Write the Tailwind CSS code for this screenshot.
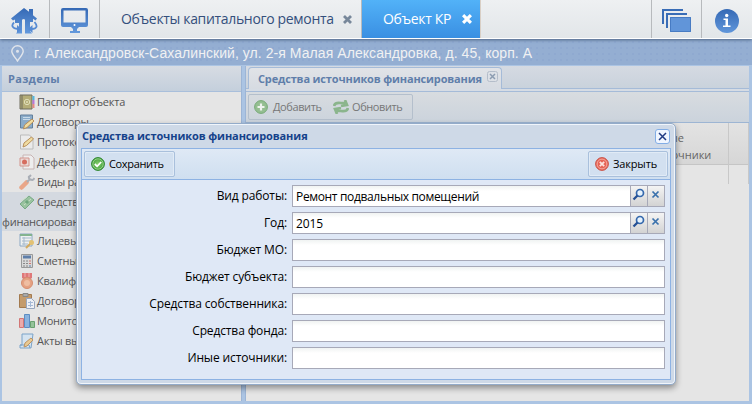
<!DOCTYPE html>
<html lang="ru">
<head>
<meta charset="utf-8">
<title>Объект КР</title>
<script src="https://cdn.jsdelivr.net/npm/@tailwindcss/browser@4"></script>
</head>
<body class="w-[752px] h-[404px] overflow-hidden relative bg-[#a5bfe0] font-['Open_Sans','Noto_Sans',sans-serif] text-[11px] leading-[20px] text-[#555]">
<svg class="absolute" width="0" height="0">
  <defs>
    <linearGradient id="blue" gradientUnits="userSpaceOnUse" x1="0" y1="0" x2="0" y2="25"><stop offset="0" stop-color="#3569b5"/><stop offset="1" stop-color="#6298dc"/></linearGradient>
    <radialGradient id="green"><stop offset="0" stop-color="#8bd06f"/><stop offset="1" stop-color="#3d9c3a"/></radialGradient>
  </defs>
</svg>
<div class="flex flex-col h-full">
  <header class="relative z-10 flex h-[39px] shrink-0 bg-linear-to-b from-[#eef0f2] to-[#e2e6e9] border-b border-white shadow-[0_1px_3px_#4d6484] text-[14px] text-[#344f7c]">
    <div class="w-[50px] border-r border-[#b7babd] flex items-center justify-center">
      <svg class="mt-[3px]" width="27" height="26" viewBox="0 0 27 26"><path fill="url(#blue)" d="M0 10.500 13 0l5 3.800V1h4v6.200l4 3.300-1.500 2-2.500-1.800V14h-3v9l2 2.500H14v-14L12 11l-1 1v13.500H5L7 23h1v-8H4v-3.500l-2 1Z"/><path fill="none" stroke="#568bd3" stroke-width="1.800" d="M3 14.500c-3 3-2 6 4 6.500M23.500 14c3.500 4 2.500 7-3 7"/><path fill="#568bd3" d="m6 17 4.500 4L6 25ZM21.500 17 17 21l4.500 4Z"/></svg>
    </div>
    <div class="w-[50px] border-r border-[#b7babd] flex items-center justify-center">
      <svg class="mt-[3px]" width="27" height="25" viewBox="0 0 27 25"><path fill-rule="evenodd" fill="url(#blue)" d="M2 0h23q2 0 2 2v15q0 2-2 2h-7l-2 2v2h3v2H9v-2h3v-2l-2-2H2q-2 0-2-2V2Q0 0 2 0ZM2.500 2.500v12h22v-12Z"/><circle cx="13.500" cy="17" r="1" fill="#fff"/></svg>
    </div>
    <div class="w-[262px] border-r border-[#b7babd] flex items-center pl-[21px]">
      <span class="w-[222px] whitespace-nowrap tracking-[-0.33px]">Объекты капитального ремонта</span>
      <svg width="9" height="9" viewBox="0 0 9 9" stroke="#77879a" stroke-width="2.800"><path d="m1 1 7 7M8 1 1 8"/></svg>
    </div>
    <div class="w-[119px] h-[38px] border-r border-[#d9cfc5] bg-linear-to-b from-[#52b2f8] to-[#3a8fe2] text-white flex items-center pl-[21px]">
      <span class="w-[79px] whitespace-nowrap tracking-[-0.35px]">Объект КР</span>
      <svg width="10" height="10" viewBox="0 0 9 9" stroke="#fff" stroke-width="2.800"><path d="m1 1 7 7M8 1 1 8"/></svg>
    </div>
    <div class="flex-1"></div>
    <div class="w-[50px] border-l border-[#b7babd] flex items-center justify-center">
      <svg class="mt-[3px]" width="29" height="23" viewBox="0 0 29 23"><path fill="#386cb6" d="M0 0h21v2H2v13H0ZM4 4h21v2H6v13H4Z"/><path fill="#6195d9" d="M8 8h21v15H8Z"/><path fill="none" stroke="#477bc3" d="M8.500 8.500h20v14h-20Z"/></svg>
    </div>
    <div class="w-[51px] border-l border-[#b7babd] flex items-center pl-[13px]">
      <svg class="mt-[3px]" width="24" height="24" viewBox="0 0 24 24"><circle cx="12" cy="12" r="12" fill="url(#blue)"/><circle cx="11.700" cy="6.500" r="1.700" fill="#fff"/><path d="M8.500 9.500h4.500v7h2.500V18h-7.500v-1.500h2.500V11h-2Z" fill="#fff"/></svg>
    </div>
  </header>

  <div class="h-[26px] shrink-0 bg-[#94aed2] bg-[radial-gradient(#8fa9d0_1px,transparent_1px)] bg-[size:6px_6px] flex items-center pl-[11px] pt-[2px] text-[#f0f1f2] text-[14px] font-['Liberation_Sans',sans-serif]">
    <svg width="13" height="17" viewBox="0 0 13 17" fill="none" stroke="#e1e5eb" stroke-width="1.400"><path d="M6.500 16C3 11 .8 9 .8 6.300a5.700 5.500 0 0 1 11.400 0C12.200 9 10 11 6.500 16Z"/><circle cx="6.500" cy="6.300" r=".8"/></svg>
    <span class="ml-[10px] whitespace-nowrap tracking-[0.06px]">г. Александровск-Сахалинский, ул. 2-я Малая Александровка, д. 45, корп. А</span>
  </div>

  <div class="flex flex-1 min-h-0 gap-[3px] pl-[2px] pr-[3px] pt-px pb-[3px] bg-[#abc4e3]">
    <aside class="w-[240px] bg-[#e5e5e5] border-r border-[#9cb5d6] overflow-hidden">
      <h2 class="h-[26px] bg-linear-to-b from-[#d7dce3] to-[#c4cfdc] border-b border-[#a9bfdb] pl-[6px] leading-[25px] font-bold text-[#607eaa] tracking-[0.3px]">Разделы</h2>
      <ul id="tree" class="tracking-[-0.23px]">
        <li class="flex h-[20px] pl-[17px] gap-[2px]"><svg width="16" height="16" viewBox="0 0 16 16" class="mt-[2px]"><path d="M1 1h12v14H1Z" fill="#b4ad78" stroke="#6e6d5c"/><path d="M3 1v14" stroke="#6e6d5c"/><circle cx="8" cy="8" r="2.700" fill="none" stroke="#e1dfb9"/><circle cx="8" cy="8" r="1" fill="#e1dfb9"/><path d="M14.500 2v4" stroke="#54b6dd" stroke-width="2"/><path d="M14.500 6v4" stroke="#b975d6" stroke-width="2"/><path d="M14.500 10v4" stroke="#e98883" stroke-width="2"/></svg>Паспорт объекта</li>
        <li class="flex h-[20px] pl-[17px] gap-[2px]"><svg width="16" height="16" viewBox="0 0 16 16" class="mt-[2px]"><path d="M1.500 1h12v13h-12Z" fill="#8aabc9" stroke="#627f9b"/><path d="M4 3.500h7M4 5.500h7" stroke="#c8dae9"/><path d="m4.500 15 1-4 7.500-6 2 2-7 6.500Z" fill="#f0dca0" stroke="#b78e59"/></svg>Договоры</li>
        <li class="flex h-[20px] pl-[17px] gap-[2px]"><svg width="16" height="16" viewBox="0 0 16 16" class="mt-[2px]"><path d="M1.500 1h9l3.500 4v10H1.500Z" fill="#ebebeb" stroke="#bbb"/><path d="m4 13 1-4 7.500-6 2 2-7 6.500Z" fill="#f0dca0" stroke="#b78e59"/></svg>Протоколы</li>
        <li class="flex h-[20px] pl-[17px] gap-[2px]"><svg width="16" height="16" viewBox="0 0 16 16" class="mt-[2px]"><path d="M4 1h8l3 3v11H4Z" fill="#eee" stroke="#c8b5b4"/><path d="M1 4h9v8H1Z" fill="#ead9d6" stroke="#d2958c"/><circle cx="5.500" cy="8" r="2.500" fill="#d66c5e"/></svg>Дефектные</li>
        <li class="flex h-[20px] pl-[17px] gap-[2px]"><svg width="16" height="16" viewBox="0 0 16 16" class="mt-[2px]"><path d="m2.500 13.500 5-5" stroke="#e9a688" stroke-width="4.500" stroke-linecap="round"/><path d="m8 8 3-3M10 2q-1 4 4 4M10 3l2-2M14 6l1.500-2" fill="none" stroke="#a9aeb6" stroke-width="2"/></svg>Виды работ</li>
        <li class="h-[39px] bg-[#d4d9e0]"><div class="flex h-[20px] pl-[17px] gap-[2px]"><svg width="16" height="16" viewBox="0 0 16 16" class="mt-[2px]"><path d="m1 10 9-8 5 4-9 9Z" fill="#9ac3a0" stroke="#78aa87"/><path d="m2 7 6-4M5 11l7-6" stroke="#cce2c8"/><circle cx="8" cy="8" r="1.800" fill="#6fa77e"/></svg>Средства</div><div class="h-[19px]">финансирования</div></li>
        <li class="flex h-[20px] pl-[17px] gap-[2px]"><svg width="16" height="16" viewBox="0 0 16 16" class="mt-[2px]"><path d="M1 1h12v12H1Z" fill="#eef0f0" stroke="#8ca8c4"/><path d="M1 2h12" stroke="#83b38f" stroke-width="2"/><path d="M3 5h9M3 8h9M3 11h6M5 4v8" stroke="#a5b9cc"/><circle cx="12.500" cy="9.500" r="2.500" fill="#e3c274"/><path d="m11 11-4 4" stroke="#d3aa5e" stroke-width="2"/></svg>Лицевые</li>
        <li class="flex h-[20px] pl-[17px] gap-[2px]"><svg width="16" height="16" viewBox="0 0 16 16" class="mt-[2px]"><path d="M2.500 1.500h11v13h-11Z" fill="#d9d9d9" stroke="#999"/><path d="M4 4h8" stroke="#5e7ea9" stroke-width="3"/><path d="M4 8h5M4 10.500h5M4 13h5" stroke="#888" stroke-dasharray="2 1"/><path d="M10 8h2M10 10.500h2" stroke="#cf7770"/><path d="M10 13h2" stroke="#5e7ea9"/></svg>Сметный</li>
        <li class="flex h-[20px] pl-[17px] gap-[2px]"><svg width="16" height="16" viewBox="0 0 16 16" class="mt-[2px]"><path d="M3 0h10v5l-3 2H6L3 5Z" fill="#df7879"/><path d="M6 0v4M10 0v4" stroke="#edb0ae"/><circle cx="8" cy="10" r="5.500" fill="#e5a283" stroke="#d68e70"/><circle cx="8" cy="10" r="3" fill="#efbea2"/></svg>Квалификация</li>
        <li class="flex h-[20px] pl-[17px] gap-[2px]"><svg width="16" height="16" viewBox="0 0 16 16" class="mt-[2px]"><path d="M.5 1.500h12v13H.5Z" fill="#c49b6c" stroke="#a37a4e"/><path d="M4 .5h5v3H4Z" fill="#aaa" stroke="#888"/><path d="M7.500 5.500h5l3 3v7h-8Z" fill="#eef0f5" stroke="#98a7bf"/><path d="M9 9.500h5M9 12.500h5M11.500 8v6" stroke="#a5b9d6"/></svg>Договора</li>
        <li class="flex h-[20px] pl-[17px] gap-[2px]"><svg width="16" height="16" viewBox="0 0 16 16" class="mt-[2px]"><path d="M.5 5.500h4v9h-4Z" fill="#ecaaa9" stroke="#d27675"/><path d="M5.500 1.500h5v13h-5Z" fill="#89b3df" stroke="#5d8dc2"/><path d="M11.500 8.500h4v6h-4Z" fill="#94c39a" stroke="#68a171"/></svg>Мониторинг</li>
        <li class="flex h-[20px] pl-[17px] gap-[2px]"><svg width="16" height="16" viewBox="0 0 16 16" class="mt-[2px]"><path d="M3 1h11l-2 14H1V12h2Z" fill="#d4e3f0" stroke="#7ba3c8"/><path d="M1 12h9l1 3" fill="none" stroke="#7ba3c8"/><path d="m5 14 1-4 6-5 2 2-6 6Z" fill="#e8c992" stroke="#bd9462"/></svg>Акты выполненных</li>
      </ul>
    </aside>

    <main class="flex-1 bg-[#e5e5e5] border-l border-[#9cb5d6] flex flex-col">
      <div class="h-[23px] shrink-0 bg-linear-to-b from-[#d5dae2] to-[#c9d2dc] border-b border-[#a5bbd8]">
        <div class="relative w-[254px] ml-[2px] h-[22px] mt-px rounded-t-[4px] border border-b-0 border-[#a5bbd8] bg-linear-to-b from-[#e1e3e7] to-[#d6dbe2] pl-[9px] leading-[22px] font-bold text-[#607eaa] whitespace-nowrap tracking-[-0.15px]"><span>Средства источников финансирования</span>
          <svg class="absolute right-[3px] top-[3px]" width="11" height="11" viewBox="0 0 11 11"><rect x=".5" y=".5" width="10" height="10" rx="2" fill="#dce0e6" stroke="#b4bdca"/><path d="m3 3 5 5M8 3 3 8" stroke="#8c9cb1" stroke-width="1.500"/></svg>
        </div>
      </div>
      <div class="h-[3px] shrink-0 bg-[#d6dce4] border-b border-[#a5bbd8]"></div>
      <div class="h-[31px] shrink-0 border-b border-[#9db5d3] bg-linear-to-b from-[#d8dce0] to-[#cbd3dc] p-[2px]">
        <div class="w-[165px] h-[26px] border border-[#b4bfcc] rounded-[2px] flex items-center pl-[5px] text-[#777] tracking-[-0.4px]">
          <svg width="14" height="14" viewBox="0 0 14 14"><circle cx="7" cy="7" r="6.400" fill="#94be91" stroke="#78aa78"/><path d="M7 3.500v7M3.500 7h7" stroke="#eef2ee" stroke-width="2.200"/></svg>
          <span class="ml-[5px] w-[60px]">Добавить</span>
          <svg width="16" height="14" viewBox="0 0 16 14" fill="none" stroke="#8bb58c" stroke-width="2.700"><path d="M1 6q1-4 7-3h4M12 0l2 5-6 1M15 8q-1 4-7 3H4M4 14 2 9l6-1"/></svg>
          <span class="ml-[3px]">Обновить</span>
        </div>
      </div>
      <div class="h-[42px] shrink-0 flex justify-end border-b border-[#c5c5c5] bg-linear-to-b from-[#e3e3e3] to-[#d6d6d6] leading-[17px] text-[#666]">
        <div class="w-[80px] h-[61px] border-r border-[#c8c8c8] pl-[5px] pt-[6px]">Иные<br>источники</div>
        <div class="w-[20px] h-[61px] border-r border-[#c8c8c8]"></div>
      </div>
    </main>
  </div>
</div>

<section class="absolute left-[76px] top-[123px] w-[600px] h-[262px] rounded-[5px] border border-[#93abc9] bg-[#ced9e7] shadow-[inset_0_0_0_1px_#f0f5fb,0_3px_6px_#0006] px-[4px] text-black">
  <div class="h-[24px] flex items-center justify-between pr-[1px]">
    <h1 class="pl-px font-bold text-[#15428b] whitespace-nowrap tracking-[-0.1px]">Средства источников финансирования</h1>
    <svg width="15" height="15" viewBox="0 0 15 15"><rect x=".5" y=".5" width="14" height="14" rx="2.500" fill="#f0f6ff" stroke="#82ade5"/><path d="m4 4 7 7M11 4l-7 7" stroke="#1f3a83" stroke-width="1.500"/></svg>
  </div>
  <div class="w-[590px] h-[232px] border border-[#8db2e3] bg-[#dfe8f6]">
    <div class="h-[31px] border-b border-[#8db2e3] bg-linear-to-b from-[#dfe9f5] to-[#cfdff0] flex justify-between p-[2px]">
      <div class="w-[91px] h-[26px] border border-[#a9c0dc] rounded-[2px] bg-[#d2e0f0] shadow-[inset_0_0_0_1px_#e1ebf6] flex items-center pl-[6px] gap-[4px] tracking-[-0.35px]">
        <svg width="14" height="14" viewBox="0 0 14 14"><circle cx="7" cy="7" r="6.400" fill="url(#green)" stroke="#2f8730"/><circle cx="7" cy="7" r="5.200" fill="none" stroke="#a9dc98" stroke-width=".8"/><path d="m3.800 7 2.300 2.300L10.200 5" fill="none" stroke="#fff" stroke-width="1.800"/></svg>Сохранить
      </div>
      <div class="w-[80px] h-[26px] border border-[#a9c0dc] rounded-[2px] bg-[#d2e0f0] shadow-[inset_0_0_0_1px_#e1ebf6] flex items-center pl-[6px] gap-[4px] tracking-[-0.15px]">
        <svg width="14" height="14" viewBox="0 0 14 14"><circle cx="7" cy="7" r="6.400" fill="#e66355" stroke="#c9564b"/><circle cx="7" cy="7" r="4.900" fill="none" stroke="#f5aaa0"/><path d="m4.800 4.800 4.400 4.400M9.200 4.800 4.800 9.200" stroke="#fbe3df" stroke-width="1.800"/></svg>Закрыть
      </div>
    </div>
    <div id="form" class="pt-[5px] flex flex-col gap-[5px] leading-[21px] text-[12px] tracking-[-0.13px]">
      <div class="flex h-[22px]"><label class="w-[205px] mr-[5px] text-right">Вид работы:</label><div class="w-[339px] border border-[#a7a9b8] bg-linear-to-b from-[#f0f3f2] via-white via-25% to-white pl-[3px] tracking-[-0.34px]">Ремонт подвальных помещений</div><div class="w-[17px] border-y border-r border-[#a7a9b8] bg-linear-to-b from-[#f4f4f4] to-[#d3d3d3]"><svg width="16" height="20" viewBox="0 0 16 20"><circle cx="9" cy="7" r="3.500" fill="#e6f2fc" stroke="#3468ad" stroke-width="1.700"/><path d="m6.500 9.500-4 4" stroke="#244f94" stroke-width="2.300"/></svg></div><div class="w-[17px] border-y border-r border-[#a7a9b8] bg-linear-to-b from-[#f4f4f4] to-[#d3d3d3]"><svg width="16" height="20" viewBox="0 0 16 20"><path d="m4.500 5.500 6 6M10.500 5.500l-6 6" stroke="#3a71ac" stroke-width="1.700"/></svg></div></div>
      <div class="flex h-[22px]"><label class="w-[205px] mr-[5px] text-right">Год:</label><div class="w-[339px] border border-[#a7a9b8] bg-linear-to-b from-[#f0f3f2] via-white via-25% to-white pl-[3px]">2015</div><div class="w-[17px] border-y border-r border-[#a7a9b8] bg-linear-to-b from-[#f4f4f4] to-[#d3d3d3]"><svg width="16" height="20" viewBox="0 0 16 20"><circle cx="9" cy="7" r="3.500" fill="#e6f2fc" stroke="#3468ad" stroke-width="1.700"/><path d="m6.500 9.500-4 4" stroke="#244f94" stroke-width="2.300"/></svg></div><div class="w-[17px] border-y border-r border-[#a7a9b8] bg-linear-to-b from-[#f4f4f4] to-[#d3d3d3]"><svg width="16" height="20" viewBox="0 0 16 20"><path d="m4.500 5.500 6 6M10.500 5.500l-6 6" stroke="#3a71ac" stroke-width="1.700"/></svg></div></div>
      <div class="flex h-[22px]"><label class="w-[205px] mr-[5px] text-right">Бюджет МО:</label><div class="w-[373px] border border-[#a7a9b8] bg-linear-to-b from-[#f0f3f2] via-white via-25% to-white"></div></div>
      <div class="flex h-[22px]"><label class="w-[205px] mr-[5px] text-right">Бюджет субъекта:</label><div class="w-[373px] border border-[#a7a9b8] bg-linear-to-b from-[#f0f3f2] via-white via-25% to-white"></div></div>
      <div class="flex h-[22px]"><label class="w-[205px] mr-[5px] text-right">Средства собственника:</label><div class="w-[373px] border border-[#a7a9b8] bg-linear-to-b from-[#f0f3f2] via-white via-25% to-white"></div></div>
      <div class="flex h-[22px]"><label class="w-[205px] mr-[5px] text-right">Средства фонда:</label><div class="w-[373px] border border-[#a7a9b8] bg-linear-to-b from-[#f0f3f2] via-white via-25% to-white"></div></div>
      <div class="flex h-[22px]"><label class="w-[205px] mr-[5px] text-right">Иные источники:</label><div class="w-[373px] border border-[#a7a9b8] bg-linear-to-b from-[#f0f3f2] via-white via-25% to-white"></div></div>
    </div>
  </div>
</section>
</body>
</html>
